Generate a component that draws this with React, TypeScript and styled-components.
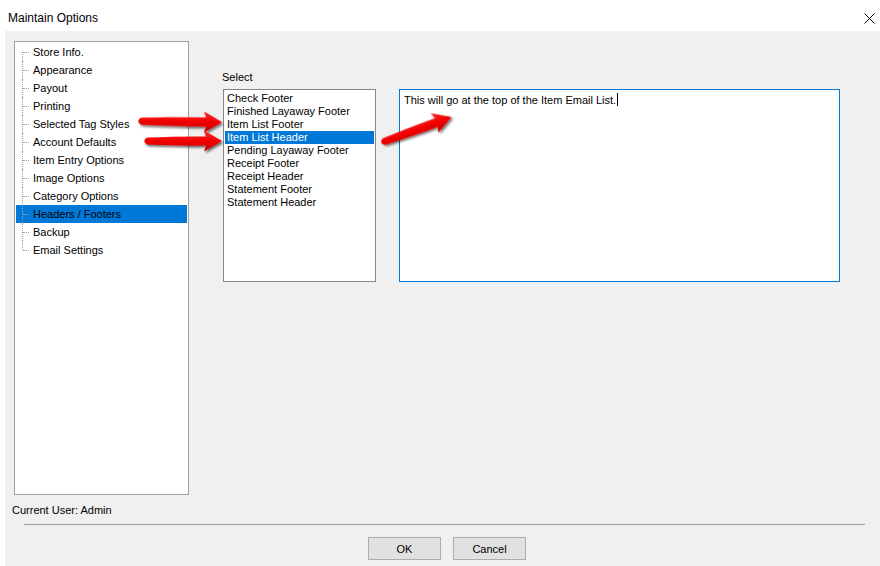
import React from "react";
import styled, { createGlobalStyle } from "styled-components";

const Global = createGlobalStyle`
  html, body { margin: 0; padding: 0; background: #ffffff; }
  body { font-family: "Liberation Sans", Arial, sans-serif; font-size: 11px; color: #000; }
  * { box-sizing: border-box; }
`;

const Window = styled.div`
  position: relative;
  width: 880px;
  height: 566px;
  display: flex;
  flex-direction: column;
  background: #fff;
  overflow: hidden;
`;

const TitleBar = styled.div`
  height: 31px;
  display: flex;
  align-items: center;
  justify-content: space-between;
  padding: 0 5px 0 8px;
`;

const Title = styled.span`
  font-size: 12px;
  margin-top: 4px;
`;

const CloseBtn = styled.div`
  width: 12px;
  height: 12px;
  margin-top: 5px;
  display: flex;
  align-items: center;
  justify-content: center;
`;

const Body = styled.div`
  flex: 1;
  margin-left: 5px;
  background: #f0f0f0;
  display: flex;
  flex-direction: column;
`;

const Main = styled.div`
  display: flex;
  padding: 10px 0 0 9px;
`;

const Tree = styled.div`
  width: 175px;
  height: 454px;
  background: #fff;
  border: 1px solid #a0a0a0;
  padding: 1px 1px 0 1px;
`;

const TreeRow = styled.div<{ $selected?: boolean; $first?: boolean; $last?: boolean }>`
  position: relative;
  height: 18px;
  line-height: 18px;
  padding-left: 17px;
  white-space: nowrap;
  background: ${(p) => (p.$selected ? "#0078d7" : "transparent")};
  color: #000;

  &::before {
    content: "";
    position: absolute;
    left: 6px;
    top: ${(p) => (p.$first ? "9px" : "0")};
    height: ${(p) => (p.$first || p.$last ? "9px" : "18px")};
    border-left: 1px dotted #a0a0a0;
  }
  &::after {
    content: "";
    position: absolute;
    left: 7px;
    top: 9px;
    width: 6px;
    border-top: 1px dotted #a0a0a0;
  }
`;

const RightPane = styled.div`
  margin-left: 34px;
  padding-top: 30px;
  display: flex;
  flex-direction: column;
`;

const Label = styled.div`
  height: 18px;
  line-height: 12px;
  margin-left: -1px;
`;

const EditRow = styled.div`
  display: flex;
  gap: 23px;
`;

const ListBox = styled.div`
  width: 153px;
  height: 193px;
  background: #fff;
  border: 1px solid #828790;
  padding: 2px 1px 1px 1px;
`;

const ListItem = styled.div<{ $selected?: boolean }>`
  height: 13px;
  line-height: 13px;
  padding-left: 2px;
  white-space: nowrap;
  background: ${(p) => (p.$selected ? "#0078d7" : "transparent")};
  color: ${(p) => (p.$selected ? "#fff" : "#000")};
`;

const TextArea = styled.div`
  width: 441px;
  height: 193px;
  background: #fff;
  border: 1px solid #0078d7;
  padding: 3px 4px;
  line-height: 13px;
`;

const Caret = styled.span`
  display: inline-block;
  width: 1px;
  height: 13px;
  background: #000;
  vertical-align: -2px;
  margin-left: 1px;
`;

const Status = styled.div`
  margin-top: 9px;
  padding-left: 7px;
  line-height: 12px;
`;

const Separator = styled.div`
  margin: 8px 15px 0 19px;
  height: 1px;
  background: #a0a0a0;
`;

const Buttons = styled.div`
  display: flex;
  justify-content: center;
  gap: 12px;
  margin-top: 12px;
  padding-left: 9px;
`;

const Button = styled.div`
  width: 73px;
  height: 23px;
  background: #e1e1e1;
  border: 1px solid #adadad;
  display: flex;
  align-items: center;
  justify-content: center;
`;

const ArrowWrap = styled.svg<{ $x: number; $y: number; $angle: number }>`
  position: absolute;
  left: ${(p) => p.$x}px;
  top: ${(p) => p.$y}px;
  overflow: visible;
  transform-origin: 0 0;
  transform: rotate(${(p) => p.$angle}deg);
  pointer-events: none;
`;

function Arrow({ x, y, length, angle }: { x: number; y: number; length: number; angle: number }) {
  const L = length;
  const head = 16;
  const d = `M 4 -3.5 Q ${L * 0.5} -5 ${L - head} -4.5 L ${L - head - 2} -10.5 L ${L} 0 L ${L - head - 2} 10.5 L ${L - head} 4.5 Q ${L * 0.5} 5 4 3.5 Q -1.5 0 4 -3.5 Z`;
  return (
    <ArrowWrap $x={x} $y={y} $angle={angle} width={L} height={1}>
      <defs>
        <filter id={`sh${x}`} x="-20%" y="-100%" width="140%" height="300%">
          <feDropShadow dx="1.5" dy="2" stdDeviation="1.3" floodColor="#000" floodOpacity="0.55" />
        </filter>
        <linearGradient id={`gr${x}`} x1="0" y1="-10" x2="0" y2="10" gradientUnits="userSpaceOnUse">
          <stop offset="0" stopColor="#ff2a2a" />
          <stop offset="0.5" stopColor="#f00000" />
          <stop offset="1" stopColor="#c80000" />
        </linearGradient>
      </defs>
      <path d={d} fill={`url(#gr${x})`} filter={`url(#sh${x})`} />
    </ArrowWrap>
  );
}

const treeItems = [
  "Store Info.",
  "Appearance",
  "Payout",
  "Printing",
  "Selected Tag Styles",
  "Account Defaults",
  "Item Entry Options",
  "Image Options",
  "Category Options",
  "Headers / Footers",
  "Backup",
  "Email Settings",
];

const listItems = [
  "Check Footer",
  "Finished Layaway Footer",
  "Item List Footer",
  "Item List Header",
  "Pending Layaway Footer",
  "Receipt Footer",
  "Receipt Header",
  "Statement Footer",
  "Statement Header",
];

export default function App() {
  return (
    <>
      <Global />
      <Window>
        <TitleBar>
          <Title>Maintain Options</Title>
          <CloseBtn>
            <svg width="11" height="11" viewBox="0 0 11 11">
              <path d="M0.5 0.5 L10.5 10.5 M10.5 0.5 L0.5 10.5" stroke="#000" strokeWidth="1" />
            </svg>
          </CloseBtn>
        </TitleBar>
        <Body>
          <Main>
            <Tree>
              {treeItems.map((t, i) => (
                <TreeRow
                  key={t}
                  $selected={t === "Headers / Footers"}
                  $first={i === 0}
                  $last={i === treeItems.length - 1}
                >
                  {t}
                </TreeRow>
              ))}
            </Tree>
            <RightPane>
              <Label>Select</Label>
              <EditRow>
                <ListBox>
                  {listItems.map((t) => (
                    <ListItem key={t} $selected={t === "Item List Header"}>
                      {t}
                    </ListItem>
                  ))}
                </ListBox>
                <TextArea>
                  This will go at the top of the Item Email List.
                  <Caret />
                </TextArea>
              </EditRow>
            </RightPane>
          </Main>
          <Status>Current User: Admin</Status>
          <Separator />
          <Buttons>
            <Button>OK</Button>
            <Button>Cancel</Button>
          </Buttons>
        </Body>
        <Arrow x={137} y={121} length={85} angle={0.8} />
        <Arrow x={143} y={141} length={79} angle={0} />
        <Arrow x={380} y={143} length={76} angle={-20} />
      </Window>
    </>
  );
}
